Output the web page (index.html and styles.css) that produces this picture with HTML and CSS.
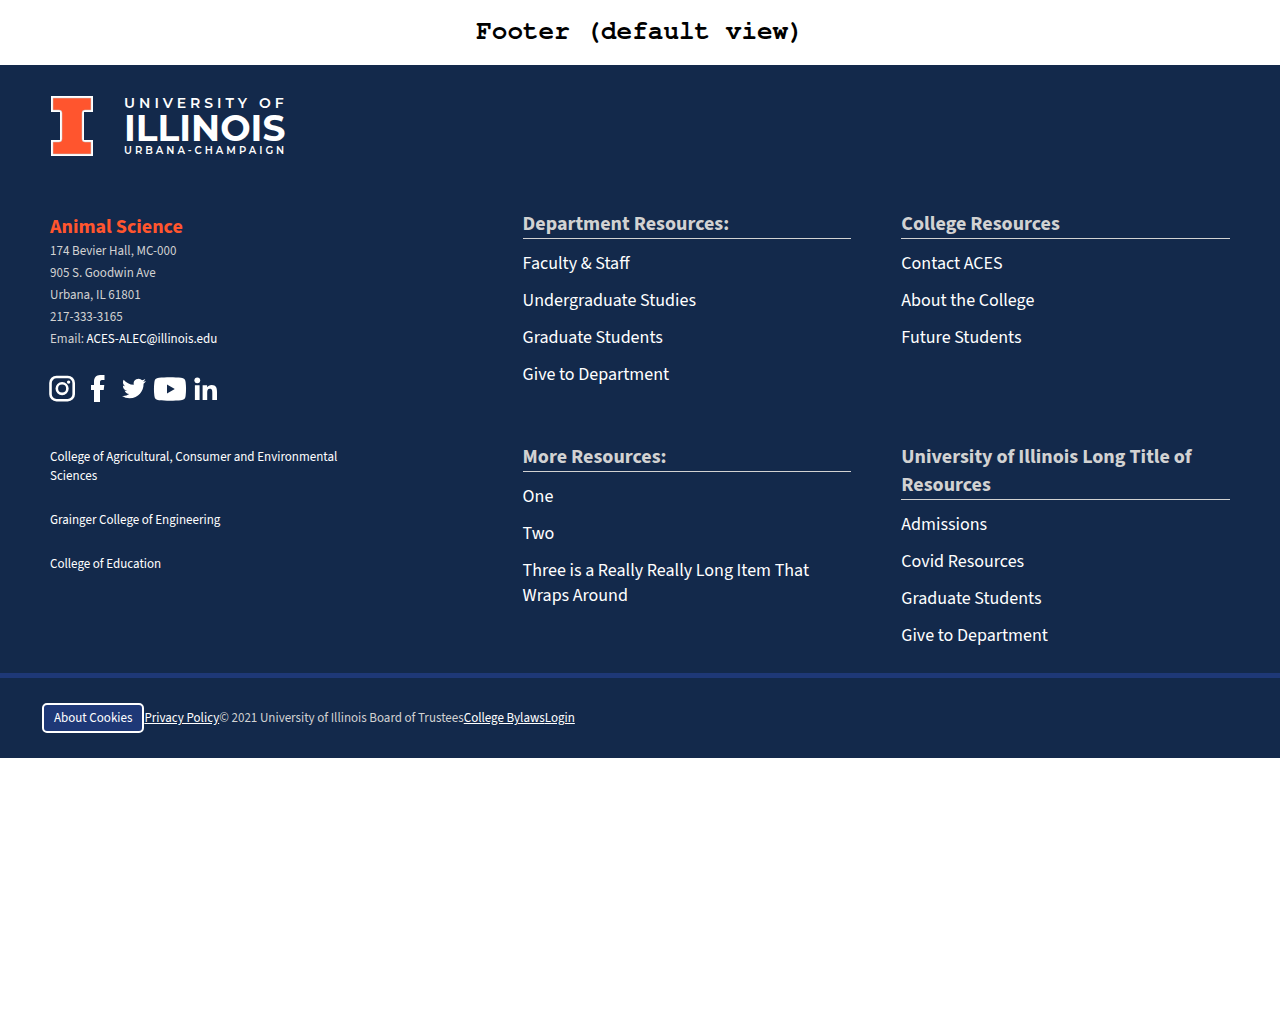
FILE: index.html
```html
<!DOCTYPE html>
<html lang="en">
<head>
<meta charset="utf-8">
<meta name="viewport" content="width=device-width, initial-scale=1">
<title>Footer (default view)</title>
<link rel="stylesheet" href="styles.css">
</head>
<body>
<h1 class="page-title">Footer (default view)</h1>
<footer class="footer">
  <div class="brand">
    <a href="#" class="brand-link" aria-label="University of Illinois Urbana-Champaign">
      <svg class="block-i" viewBox="0 0 42 60" aria-hidden="true">
        <path fill="#fff" d="M0 0H42V16H33V44H42V60H0V44H9V16H0Z"/>
        <path fill="#ff552e" stroke="#c8c6c7" stroke-width=".5" d="M2 2H40V14H34Q31 14 31 17V43Q31 46 34 46H40V58H2V46H8Q11 46 11 43V17Q11 14 8 14H2Z"/>
      </svg>
      <span class="wordmark">
        <span class="mark-top">UNIVERSITY OF</span>
        <span class="mark-name">ILLINOIS</span>
        <span class="mark-bottom">URBANA-CHAMPAIGN</span>
      </span>
    </a>
  </div>
  <div class="columns">
    <div class="contact">
      <h2 class="unit">Animal Science</h2>
      <address class="address">
        <div>174 Bevier Hall, MC-000</div>
        <div>905 S. Goodwin Ave</div>
        <div>Urbana, IL 61801</div>
        <div>217-333-3165</div>
        <div>Email: <a href="mailto:ACES-ALEC@illinois.edu">ACES-ALEC@illinois.edu</a></div>
      </address>
      <div class="social">
        <a href="#" aria-label="Instagram"><svg width="26" height="28" viewBox="0 0 26 28"><g fill="none" stroke="#fff"><rect x=".5" y="2" width="23.200" height="23.200" rx="6" stroke-width="2.600"/><circle cx="12.100" cy="13.600" r="5.300" stroke-width="2.600"/></g><circle cx="18.600" cy="7.100" r="1.700" fill="#fff"/></svg></a>
        <a href="#" aria-label="Facebook"><svg width="14" height="28" viewBox="0 0 14 28"><path fill="#fff" d="M3 27V15H0V10H3V6.600C3 2.600 5.300.200 9 0h4.500V5H11C9.300 5 9 6 9 7.400V10h4.300l-.6 5H9v12z"/></svg></a>
        <a href="#" aria-label="Twitter"><svg width="24" height="28" viewBox="0 0 24 28"><path fill="#fff" transform="translate(0 1.500)" d="M23.953 4.570a10 10 0 0 1-2.825.775 4.958 4.958 0 0 0 2.163-2.723c-.951.555-2.005.959-3.127 1.184a4.920 4.920 0 0 0-8.384 4.482C7.690 8.095 4.067 6.130 1.640 3.162a4.822 4.822 0 0 0-.666 2.475c0 1.710.870 3.213 2.188 4.096a4.904 4.904 0 0 1-2.228-.616v.060a4.923 4.923 0 0 0 3.946 4.827 4.996 4.996 0 0 1-2.212.085 4.936 4.936 0 0 0 4.604 3.417A9.867 9.867 0 0 1 0 19.540a13.995 13.995 0 0 0 7.557 2.209c9.053 0 13.998-7.496 13.998-13.985 0-.210 0-.420-.015-.630A9.935 9.935 0 0 0 24 4.590z"/></svg></a>
        <a href="#" aria-label="YouTube"><svg width="32" height="28" viewBox="0 0 32 28"><path fill="#fff" fill-rule="evenodd" d="M5 2.700C11 2 21 2 27 2.700c3.200.3 4.300 1.800 4.600 4.300.6 5 .6 9 0 14-.3 2.500-1.400 3.900-4.600 4.200-6 .6-16 .6-22 0-3.200-.3-4.300-1.700-4.600-4.200-.6-5-.6-9 0-14C.7 4.500 1.800 3 5 2.700zM13 9.500v9l7.800-4.500z"/></svg></a>
        <a href="#" aria-label="LinkedIn"><svg width="23" height="28" viewBox="0 0 23 28"><path fill="#fff" d="M.9 10.300h4.700V25H.9zM8.600 10.300h4.500v2c.8-1.400 2.300-2.400 4.600-2.400 4.500 0 5.300 3 5.300 7V25H18.300v-7.200c0-2-.1-4-2.500-4-2.300 0-2.600 1.900-2.600 3.900V25H8.600z"/><circle cx="3.300" cy="5.300" r="2.900" fill="#fff"/></svg></a>
      </div>
      <ul class="colleges">
        <li><a href="#">College of Agricultural, Consumer and Environmental Sciences</a></li>
        <li><a href="#">Grainger College of Engineering</a></li>
        <li><a href="#">College of Education</a></li>
      </ul>
    </div>
    <nav class="links" aria-labelledby="dept">
      <h2 id="dept">Department Resources:</h2>
      <ul>
        <li><a href="#">Faculty &amp; Staff</a></li>
        <li><a href="#">Undergraduate Studies</a></li>
        <li><a href="#">Graduate Students</a></li>
        <li><a href="#">Give to Department</a></li>
      </ul>
    </nav>
    <nav class="links" aria-labelledby="college">
      <h2 id="college">College Resources</h2>
      <ul>
        <li><a href="#">Contact ACES</a></li>
        <li><a href="#">About the College</a></li>
        <li><a href="#">Future Students</a></li>
      </ul>
    </nav>
    <nav class="links" aria-labelledby="more">
      <h2 id="more">More Resources:</h2>
      <ul>
        <li><a href="#">One</a></li>
        <li><a href="#">Two</a></li>
        <li><a href="#">Three is a Really Really Long Item That Wraps Around</a></li>
      </ul>
    </nav>
    <nav class="links" aria-labelledby="univ">
      <h2 id="univ">University of Illinois Long Title of Resources</h2>
      <ul>
        <li><a href="#">Admissions</a></li>
        <li><a href="#">Covid Resources</a></li>
        <li><a href="#">Graduate Students</a></li>
        <li><a href="#">Give to Department</a></li>
      </ul>
    </nav>
  </div>
  <div class="legal">
    <button type="button" class="cookies">About Cookies</button>
    <a href="#">Privacy Policy</a>
    <span>© 2021 University of Illinois Board of Trustees</span>
    <a href="#">College Bylaws</a>
    <a href="#">Login</a>
  </div>
</footer>
</body>
</html>
```
FILE: styles.css
```css
* { box-sizing: border-box; }

body {
  margin: 0;
  background: #fff;
  font-family: "Source Sans Pro", "Source Sans 3", "Noto Sans CJK SC", sans-serif;
}

h1, h2, ul { margin: 0; padding: 0; }
ul { list-style: none; }

.page-title {
  padding: 15px 0 18px;
  text-align: center;
  font: bold 26px/32px FreeMono, "Courier Prime", "Liberation Mono", monospace;
}

.footer {
  background: #13294b;
  color: #d2d2d2;
}

.footer a {
  color: #fff;
  text-decoration: none;
}

.brand { padding: 31px 51px 0; }
.brand-link { display: inline-flex; gap: 31px; vertical-align: top; }
.block-i { width: 42px; height: 60px; }
.wordmark {
  display: flex;
  flex-direction: column;
  font-family: Montserrat, Lato, sans-serif;
  font-weight: 700;
  white-space: nowrap;
}
.mark-top { font-size: 14px; font-weight: 600; line-height: 14px; letter-spacing: 4px; }
.mark-name { font-size: 36px; line-height: 36px; }
.mark-bottom { font-size: 10px; font-weight: 600; line-height: 10px; letter-spacing: 3px; }

.columns {
  display: grid;
  grid-template-columns: 9fr 7fr 7fr;
  gap: 56px 50px;
  padding: 54px 50px 25px;
}

.contact {
  grid-row: span 2;
  padding-top: 4px;
}

.unit {
  color: #ff552e;
  font-size: 20px;
  line-height: 26px;
}

.address {
  font-style: normal;
  font-size: 13px;
  line-height: 22px;
}

.social {
  display: flex;
  margin: 25px 0 45px;
}
.social a { height: 28px; }
.social a + a { margin-left: 8px; }
.social a:nth-child(2) { margin: 0 9px 0 15px; }
.social svg { display: block; overflow: visible; }

.colleges {
  display: grid;
  gap: 25px;
  max-width: 300px;
  font-size: 13px;
  line-height: 19px;
}

.links h2 {
  border-bottom: 1px solid #d2d2d2;
  font-size: 20px;
  line-height: 28px;
}
.links li {
  margin-top: 12px;
  font-size: 18px;
  line-height: 25px;
}

.legal {
  display: flex;
  flex-wrap: wrap;
  align-items: center;
  padding: 25px 42px;
  border-top: 5px solid #1e3877;
  font-size: 13px;
  line-height: 18px;
}
.legal a { text-decoration: underline; }

.cookies {
  height: 30px;
  padding: 0 10px;
  border: 2px solid #fff;
  border-radius: 5px;
  background: #1e3877;
  color: #fff;
  font: inherit;
}
```
